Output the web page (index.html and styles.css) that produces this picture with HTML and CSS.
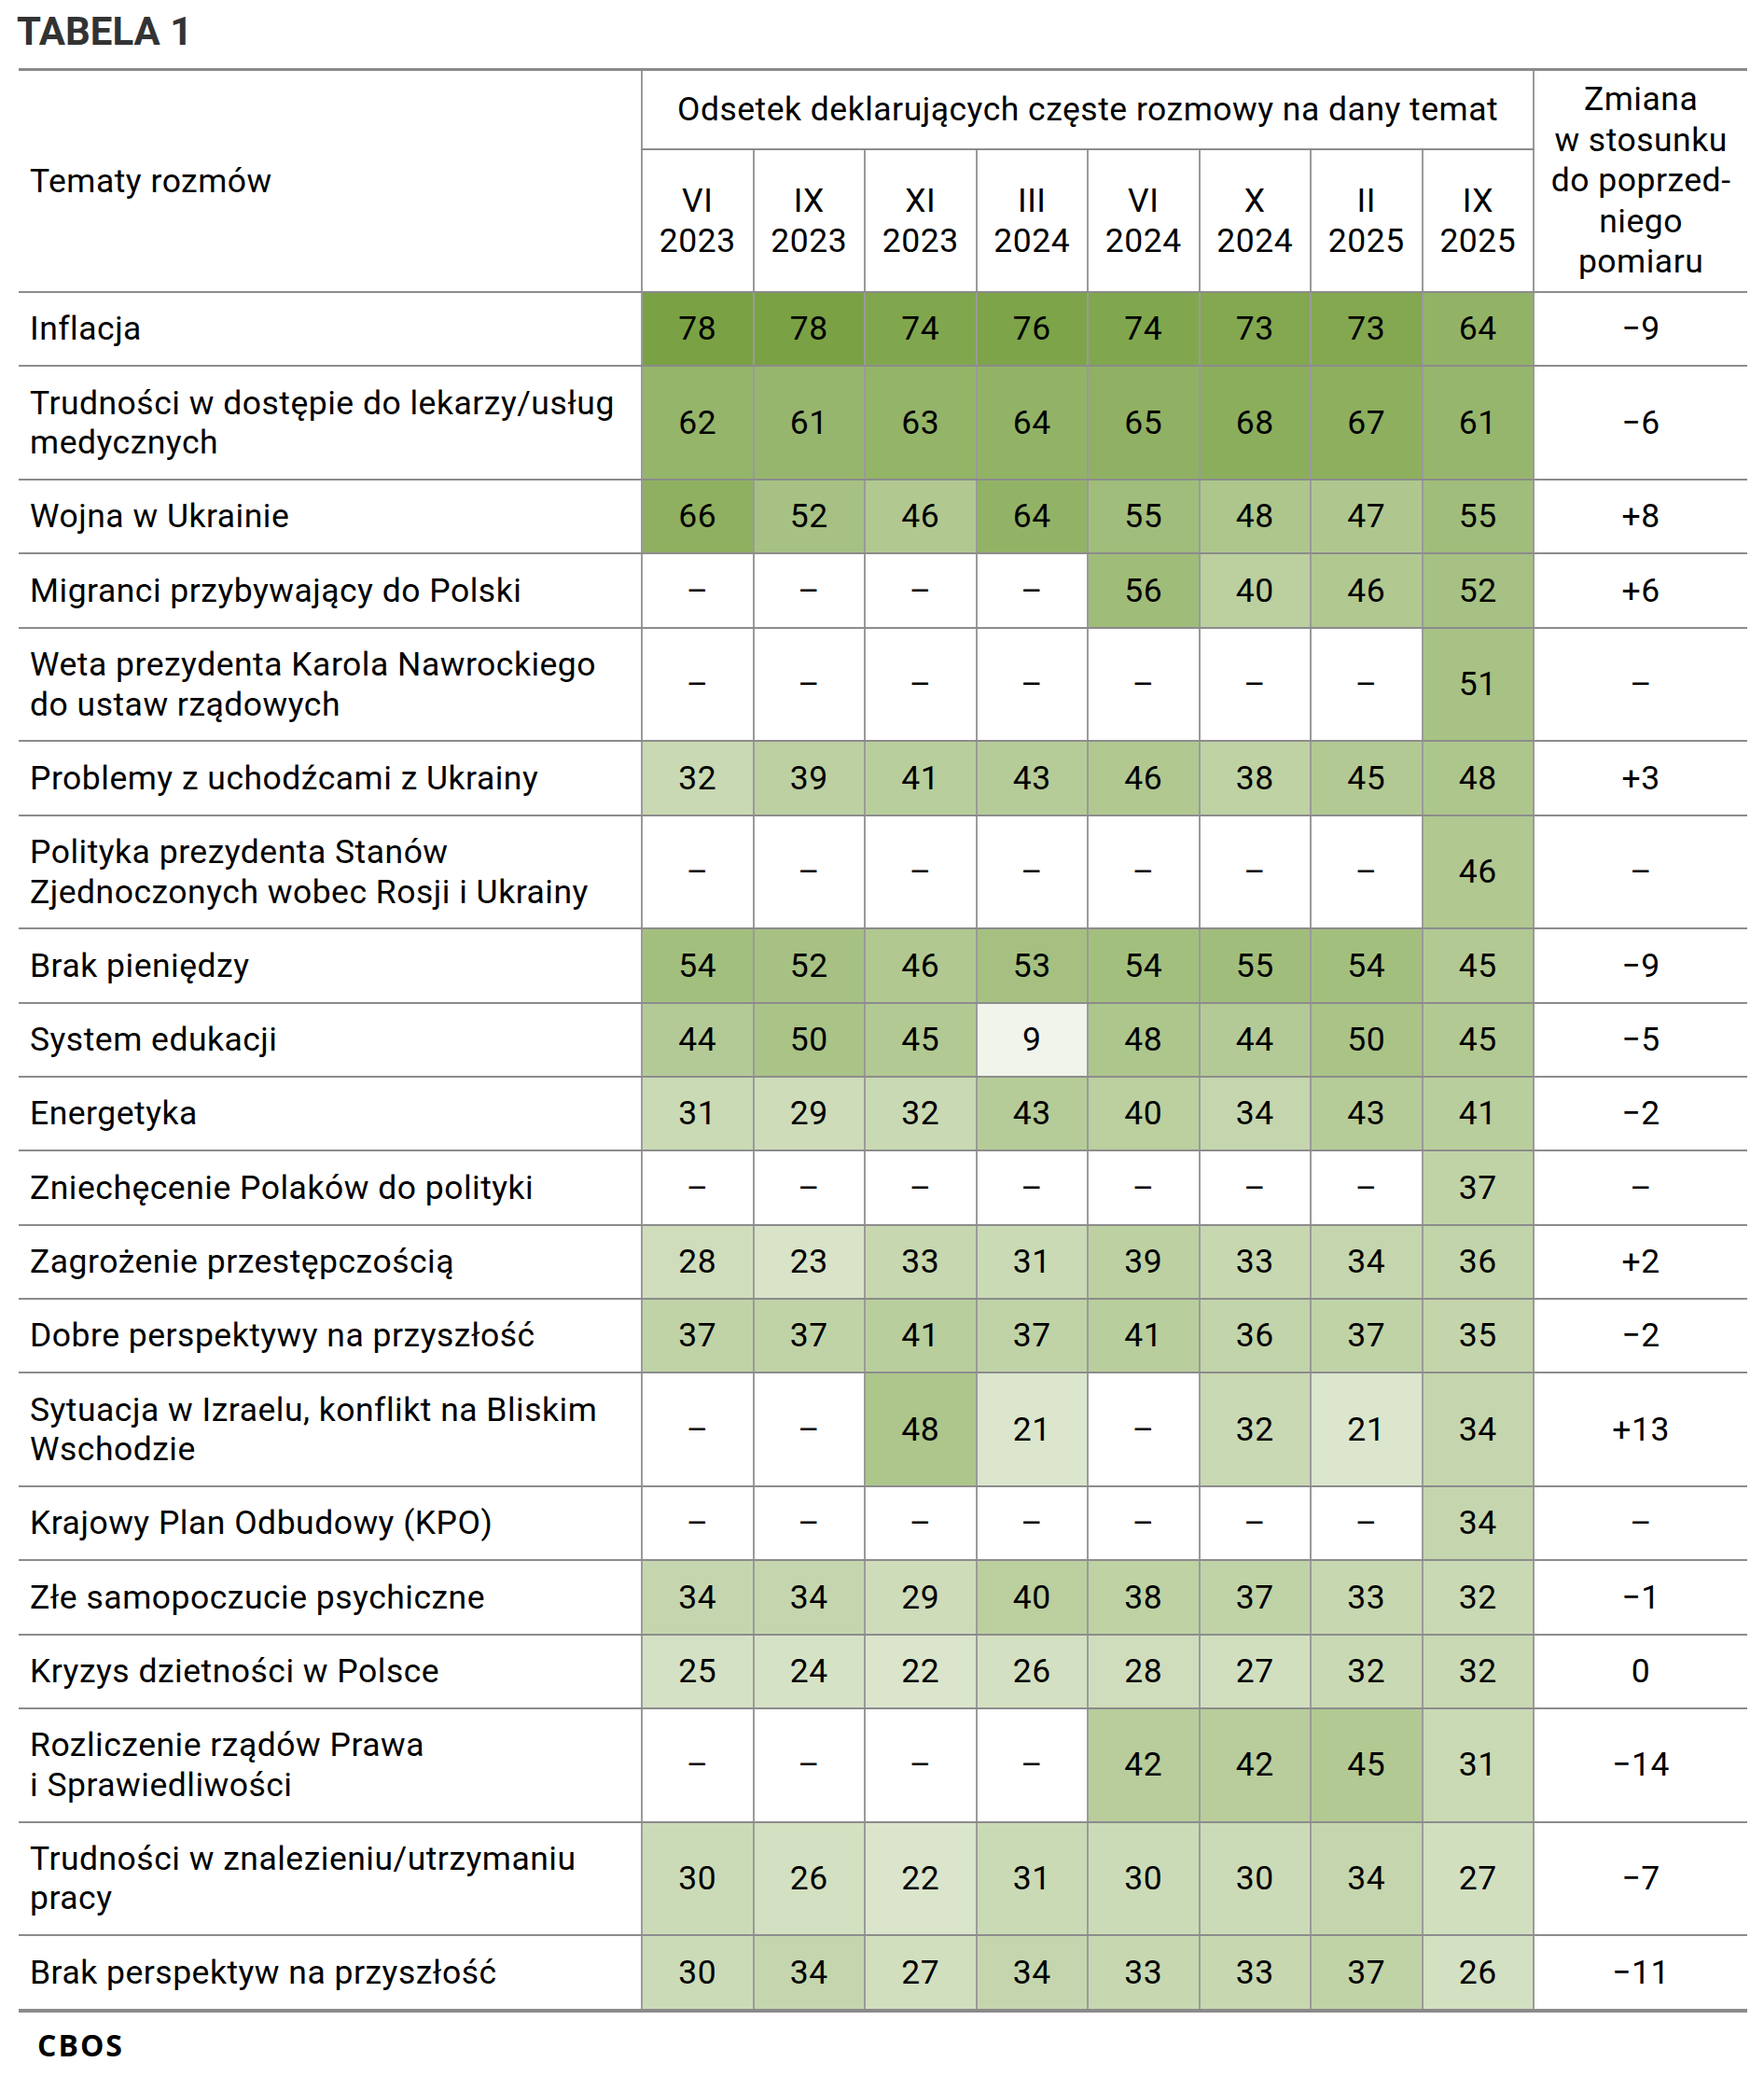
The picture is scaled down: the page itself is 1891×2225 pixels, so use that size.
FILE: index.html
```html
<!DOCTYPE html>
<html lang="pl">
<head>
<meta charset="utf-8">
<title>Tabela 1</title>
<link rel="stylesheet" href="styles.css">
</head>
<body>
<div class="page">
  <h1 class="title">TABELA 1</h1>
  <table class="tbl">
    <colgroup>
      <col class="c-topic">
      <col class="c-val"><col class="c-val"><col class="c-val"><col class="c-val">
      <col class="c-val"><col class="c-val"><col class="c-val"><col class="c-val">
      <col class="c-chg">
    </colgroup>
    <thead>
      <tr class="h1">
        <th class="topic" rowspan="2">Tematy rozmów</th>
        <th class="grp" colspan="8">Odsetek deklarujących częste rozmowy na dany temat</th>
        <th class="chg-head" rowspan="2">Zmiana<br>w stosunku<br>do poprzed-<br>niego<br>pomiaru</th>
      </tr>
      <tr class="h2">
        <th class="yr">VI<br>2023</th>
        <th class="yr">IX<br>2023</th>
        <th class="yr">XI<br>2023</th>
        <th class="yr">III<br>2024</th>
        <th class="yr">VI<br>2024</th>
        <th class="yr">X<br>2024</th>
        <th class="yr">II<br>2025</th>
        <th class="yr">IX<br>2025</th>
      </tr>
    </thead>
    <tbody>
      <tr>
        <td class="topic">Inflacja</td>
        <td class="v" style="--v:78">78</td><td class="v" style="--v:78">78</td><td class="v" style="--v:74">74</td><td class="v" style="--v:76">76</td>
        <td class="v" style="--v:74">74</td><td class="v" style="--v:73">73</td><td class="v" style="--v:73">73</td><td class="v" style="--v:64">64</td>
        <td class="chg">−9</td>
      </tr>
      <tr>
        <td class="topic">Trudności w dostępie do lekarzy/usług<br>medycznych</td>
        <td class="v" style="--v:62">62</td><td class="v" style="--v:61">61</td><td class="v" style="--v:63">63</td><td class="v" style="--v:64">64</td>
        <td class="v" style="--v:65">65</td><td class="v" style="--v:68">68</td><td class="v" style="--v:67">67</td><td class="v" style="--v:61">61</td>
        <td class="chg">−6</td>
      </tr>
      <tr>
        <td class="topic">Wojna w Ukrainie</td>
        <td class="v" style="--v:66">66</td><td class="v" style="--v:52">52</td><td class="v" style="--v:46">46</td><td class="v" style="--v:64">64</td>
        <td class="v" style="--v:55">55</td><td class="v" style="--v:48">48</td><td class="v" style="--v:47">47</td><td class="v" style="--v:55">55</td>
        <td class="chg">+8</td>
      </tr>
      <tr>
        <td class="topic">Migranci przybywający do Polski</td>
        <td class="n">–</td><td class="n">–</td><td class="n">–</td><td class="n">–</td>
        <td class="v" style="--v:56">56</td><td class="v" style="--v:40">40</td><td class="v" style="--v:46">46</td><td class="v" style="--v:52">52</td>
        <td class="chg">+6</td>
      </tr>
      <tr>
        <td class="topic">Weta prezydenta Karola Nawrockiego<br>do ustaw rządowych</td>
        <td class="n">–</td><td class="n">–</td><td class="n">–</td><td class="n">–</td>
        <td class="n">–</td><td class="n">–</td><td class="n">–</td><td class="v" style="--v:51">51</td>
        <td class="chg">–</td>
      </tr>
      <tr>
        <td class="topic">Problemy z uchodźcami z Ukrainy</td>
        <td class="v" style="--v:32">32</td><td class="v" style="--v:39">39</td><td class="v" style="--v:41">41</td><td class="v" style="--v:43">43</td>
        <td class="v" style="--v:46">46</td><td class="v" style="--v:38">38</td><td class="v" style="--v:45">45</td><td class="v" style="--v:48">48</td>
        <td class="chg">+3</td>
      </tr>
      <tr>
        <td class="topic">Polityka prezydenta Stanów<br>Zjednoczonych wobec Rosji i Ukrainy</td>
        <td class="n">–</td><td class="n">–</td><td class="n">–</td><td class="n">–</td>
        <td class="n">–</td><td class="n">–</td><td class="n">–</td><td class="v" style="--v:46">46</td>
        <td class="chg">–</td>
      </tr>
      <tr>
        <td class="topic">Brak pieniędzy</td>
        <td class="v" style="--v:54">54</td><td class="v" style="--v:52">52</td><td class="v" style="--v:46">46</td><td class="v" style="--v:53">53</td>
        <td class="v" style="--v:54">54</td><td class="v" style="--v:55">55</td><td class="v" style="--v:54">54</td><td class="v" style="--v:45">45</td>
        <td class="chg">−9</td>
      </tr>
      <tr>
        <td class="topic">System edukacji</td>
        <td class="v" style="--v:44">44</td><td class="v" style="--v:50">50</td><td class="v" style="--v:45">45</td><td class="v" style="--v:9">9</td>
        <td class="v" style="--v:48">48</td><td class="v" style="--v:44">44</td><td class="v" style="--v:50">50</td><td class="v" style="--v:45">45</td>
        <td class="chg">−5</td>
      </tr>
      <tr>
        <td class="topic">Energetyka</td>
        <td class="v" style="--v:31">31</td><td class="v" style="--v:29">29</td><td class="v" style="--v:32">32</td><td class="v" style="--v:43">43</td>
        <td class="v" style="--v:40">40</td><td class="v" style="--v:34">34</td><td class="v" style="--v:43">43</td><td class="v" style="--v:41">41</td>
        <td class="chg">−2</td>
      </tr>
      <tr>
        <td class="topic">Zniechęcenie Polaków do polityki</td>
        <td class="n">–</td><td class="n">–</td><td class="n">–</td><td class="n">–</td>
        <td class="n">–</td><td class="n">–</td><td class="n">–</td><td class="v" style="--v:37">37</td>
        <td class="chg">–</td>
      </tr>
      <tr>
        <td class="topic">Zagrożenie przestępczością</td>
        <td class="v" style="--v:28">28</td><td class="v" style="--v:23">23</td><td class="v" style="--v:33">33</td><td class="v" style="--v:31">31</td>
        <td class="v" style="--v:39">39</td><td class="v" style="--v:33">33</td><td class="v" style="--v:34">34</td><td class="v" style="--v:36">36</td>
        <td class="chg">+2</td>
      </tr>
      <tr>
        <td class="topic">Dobre perspektywy na przyszłość</td>
        <td class="v" style="--v:37">37</td><td class="v" style="--v:37">37</td><td class="v" style="--v:41">41</td><td class="v" style="--v:37">37</td>
        <td class="v" style="--v:41">41</td><td class="v" style="--v:36">36</td><td class="v" style="--v:37">37</td><td class="v" style="--v:35">35</td>
        <td class="chg">−2</td>
      </tr>
      <tr>
        <td class="topic">Sytuacja w Izraelu, konflikt na Bliskim<br>Wschodzie</td>
        <td class="n">–</td><td class="n">–</td><td class="v" style="--v:48">48</td><td class="v" style="--v:21">21</td>
        <td class="n">–</td><td class="v" style="--v:32">32</td><td class="v" style="--v:21">21</td><td class="v" style="--v:34">34</td>
        <td class="chg">+13</td>
      </tr>
      <tr>
        <td class="topic">Krajowy Plan Odbudowy (KPO)</td>
        <td class="n">–</td><td class="n">–</td><td class="n">–</td><td class="n">–</td>
        <td class="n">–</td><td class="n">–</td><td class="n">–</td><td class="v" style="--v:34">34</td>
        <td class="chg">–</td>
      </tr>
      <tr>
        <td class="topic">Złe samopoczucie psychiczne</td>
        <td class="v" style="--v:34">34</td><td class="v" style="--v:34">34</td><td class="v" style="--v:29">29</td><td class="v" style="--v:40">40</td>
        <td class="v" style="--v:38">38</td><td class="v" style="--v:37">37</td><td class="v" style="--v:33">33</td><td class="v" style="--v:32">32</td>
        <td class="chg">−1</td>
      </tr>
      <tr>
        <td class="topic">Kryzys dzietności w Polsce</td>
        <td class="v" style="--v:25">25</td><td class="v" style="--v:24">24</td><td class="v" style="--v:22">22</td><td class="v" style="--v:26">26</td>
        <td class="v" style="--v:28">28</td><td class="v" style="--v:27">27</td><td class="v" style="--v:32">32</td><td class="v" style="--v:32">32</td>
        <td class="chg">0</td>
      </tr>
      <tr>
        <td class="topic">Rozliczenie rządów Prawa<br>i Sprawiedliwości</td>
        <td class="n">–</td><td class="n">–</td><td class="n">–</td><td class="n">–</td>
        <td class="v" style="--v:42">42</td><td class="v" style="--v:42">42</td><td class="v" style="--v:45">45</td><td class="v" style="--v:31">31</td>
        <td class="chg">−14</td>
      </tr>
      <tr>
        <td class="topic">Trudności w znalezieniu/utrzymaniu<br>pracy</td>
        <td class="v" style="--v:30">30</td><td class="v" style="--v:26">26</td><td class="v" style="--v:22">22</td><td class="v" style="--v:31">31</td>
        <td class="v" style="--v:30">30</td><td class="v" style="--v:30">30</td><td class="v" style="--v:34">34</td><td class="v" style="--v:27">27</td>
        <td class="chg">−7</td>
      </tr>
      <tr>
        <td class="topic">Brak perspektyw na przyszłość</td>
        <td class="v" style="--v:30">30</td><td class="v" style="--v:34">34</td><td class="v" style="--v:27">27</td><td class="v" style="--v:34">34</td>
        <td class="v" style="--v:33">33</td><td class="v" style="--v:33">33</td><td class="v" style="--v:37">37</td><td class="v" style="--v:26">26</td>
        <td class="chg">−11</td>
      </tr>
    </tbody>
  </table>
  <div class="src">CBOS</div>
</div>
</body>
</html>
```

FILE: styles.css
```css
* {
  box-sizing: border-box;
}

body {
  margin: 0;
  background: #ffffff;
  color: #000000;
  font-family: Roboto, "Liberation Sans", Arial, sans-serif;
}

.page {
  width: 1891px;
  padding: 9px 18px 0 20px;
}

.title {
  margin: 0 0 14px -2px;
  font-family: Roboto, "Liberation Sans", Arial, sans-serif;
  font-weight: 700;
  font-size: 42px;
  line-height: 50px;
  color: #333333;
}

.tbl {
  width: 1853px;
  border-collapse: collapse;
  table-layout: fixed;
  font-size: 35.5px;
  line-height: 42.5px;
  letter-spacing: 0.5px;
}

.c-topic { width: 668px; }
.c-val { width: 119.5px; }
.c-chg { width: 229px; }

.tbl th,
.tbl td {
  padding: 17.4px 0;
  font-weight: 400;
  text-align: center;
  vertical-align: middle;
  border-bottom: 2px solid #8c8c8c;
  white-space: nowrap;
}

.tbl thead tr.h1 th {
  border-top: 3px solid #8a8a8a;
}

.tbl .topic {
  text-align: left;
  padding-left: 12px;
}

.tbl th.topic {
  padding-top: 0;
  padding-bottom: 0;
}

.tbl .grp {
  padding: 20.25px 0;
  border-left: 2px solid #9a9a9a;
}

.tbl .chg-head {
  padding: 0;
  line-height: 43.5px;
  border-left: 2px solid #9a9a9a;
}

.tbl .yr {
  padding: 33px 0;
  border-left: 2px solid #9a9a9a;
}

.tbl td.v,
.tbl td.n,
.tbl td.chg {
  border-left: 2px solid #9a9a9a;
}

.tbl td.n {
  background: #ffffff;
}

.tbl td.v {
  background: rgb(
    calc(240 - (var(--v) - 9) * 1.7101),
    calc(244 - (var(--v) - 9) * 1.1884),
    calc(234 - (var(--v) - 9) * 2.4058)
  );
}

.tbl tbody tr:last-child td {
  border-bottom: 4px solid #8a8a8a;
}

.src {
  margin-top: 17px;
  padding-left: 20px;
  font-family: "Open Sans", "Noto Sans", Arial, sans-serif;
  font-weight: 700;
  font-size: 32px;
  line-height: 36px;
  letter-spacing: 2px;
  color: #000000;
}
```
